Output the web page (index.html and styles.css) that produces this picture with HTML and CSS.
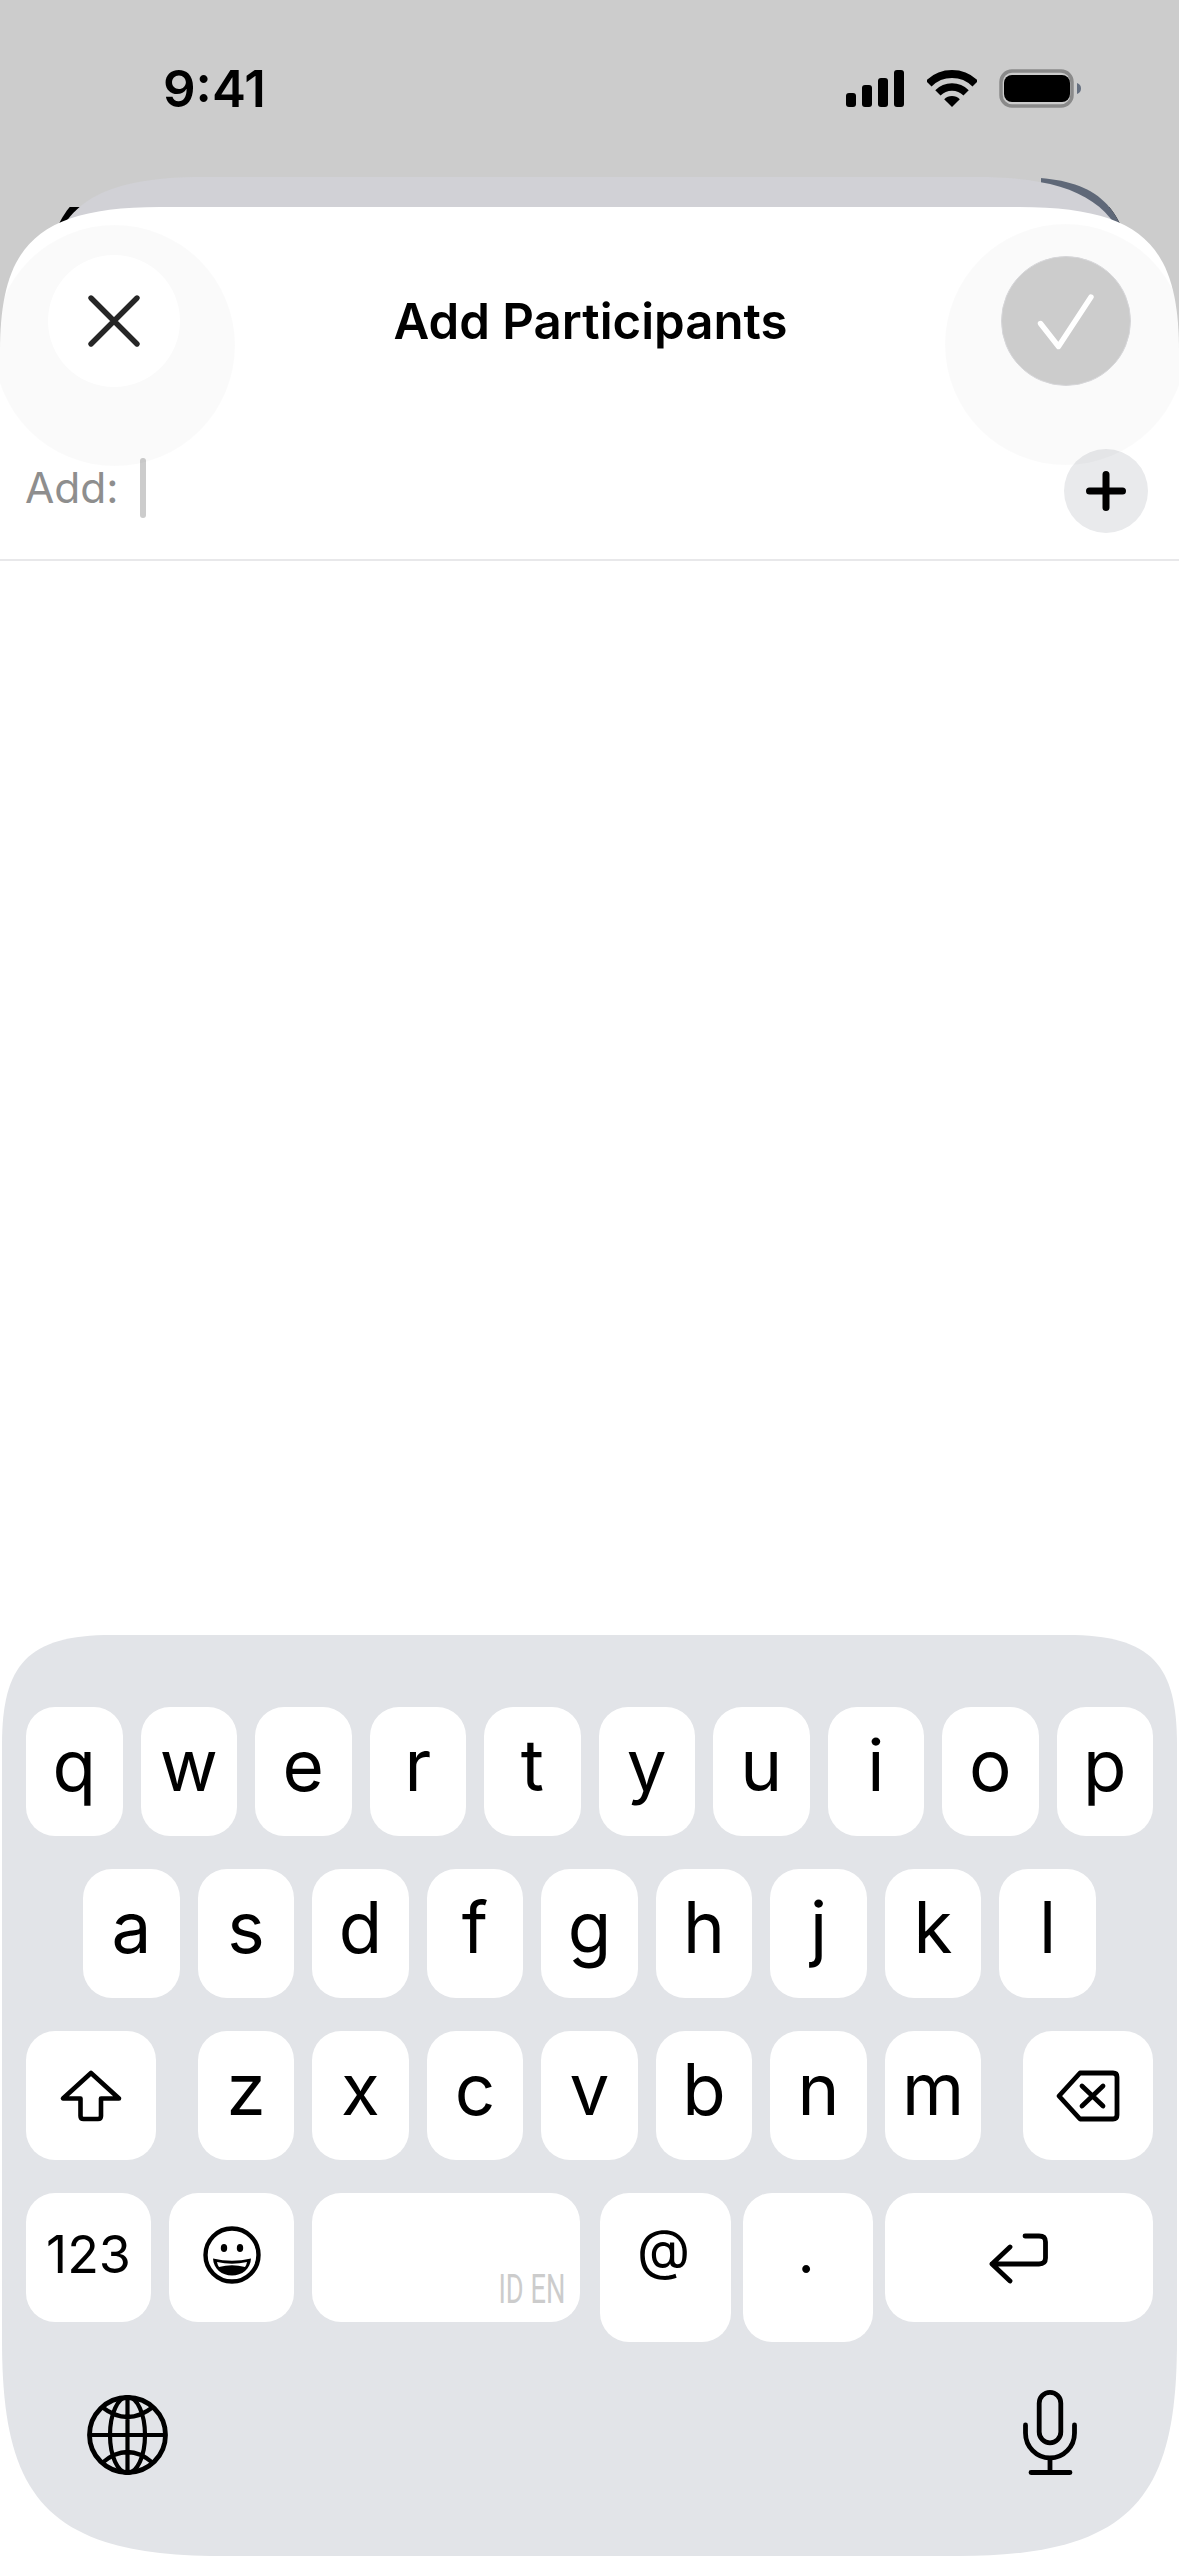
FILE: index.html
```html
<!DOCTYPE html>
<html lang="en">
<head>
<meta charset="utf-8">
<title>Add Participants</title>
<link rel="stylesheet" href="styles.css">
</head>
<body>
<div class="phone">
  <div class="card-back"></div>
  <div class="card-mid"></div>
  <header class="status">
    <span class="time">9:41</span>
    <div class="status-icons">
      <svg class="ic-signal" width="58" height="37" viewBox="0 0 58 37"><rect x="0" y="23" width="10" height="14" rx="3"/><rect x="16" y="15" width="10" height="22" rx="3"/><rect x="32" y="8" width="10" height="29" rx="3"/><rect x="48" y="0" width="10" height="37" rx="3"/></svg>
      <svg class="ic-wifi" width="50" height="37" viewBox="0 0 50 37"><path d="M1.7 13.7A33 33 0 0 1 48.3 13.7" fill="none" stroke="#000" stroke-width="8"/><path d="M10.9 22.9A20 20 0 0 1 39.1 22.9" fill="none" stroke="#000" stroke-width="7.5"/><path d="M25 37L17.2 29.2A11 11 0 0 1 32.8 29.2Z"/></svg>
      <svg class="ic-battery" width="82" height="39" viewBox="0 0 82 39"><rect x="2" y="2" width="71" height="35" rx="11" fill="none" stroke="#8a8a8a" stroke-width="3.5"/><rect x="5" y="6" width="66" height="27" rx="8"/><path d="M78 14C81 15 82 17 82 19.5S81 24 78 25Z" fill="#667080"/></svg>
    </div>
  </header>
  <main class="sheet">
    <div class="sheet-head">
      <button class="round close"><svg width="52" height="52" viewBox="0 0 52 52"><path d="M3 3L49 49M49 3L3 49" fill="none" stroke="#262626" stroke-width="5.4" stroke-linecap="round"/></svg></button>
      <h1 class="title">Add Participants</h1>
      <button class="round confirm"><svg width="56" height="55" viewBox="0 0 56 55"><path d="M2.5 29.500L20.500 52.500L53 3" fill="none" stroke="#fff" stroke-width="5.400" stroke-linecap="round" stroke-linejoin="round"/></svg></button>
    </div>
    <div class="add-row">
      <div class="add-field"><span class="add-label">Add:</span><span class="caret"></span></div>
      <button class="plus"><svg width="40" height="40" viewBox="0 0 40 40"><path d="M20 3.5V36.5M3.5 20H36.5" fill="none" stroke="#000" stroke-width="7" stroke-linecap="round"/></svg></button>
    </div>
    <section class="keyboard">
      <div class="row">
        <span class="key">q</span><span class="key">w</span><span class="key">e</span><span class="key">r</span><span class="key">t</span><span class="key">y</span><span class="key">u</span><span class="key">i</span><span class="key">o</span><span class="key">p</span>
      </div>
      <div class="row row-center">
        <span class="key">a</span><span class="key">s</span><span class="key">d</span><span class="key">f</span><span class="key">g</span><span class="key">h</span><span class="key">j</span><span class="key">k</span><span class="key">l</span>
      </div>
      <div class="row row-between">
        <span class="key key-wide"><svg width="64" height="54" viewBox="0 0 64 54"><path d="M32 4L4 29.5H21.5V47Q21.5 50 24.5 50H39Q42 50 42 47V29.5H60Z" fill="none" stroke="#000" stroke-width="4.6" stroke-linejoin="round"/></svg></span>
        <div class="letters">
          <span class="key">z</span><span class="key">x</span><span class="key">c</span><span class="key">v</span><span class="key">b</span><span class="key">n</span><span class="key">m</span>
        </div>
        <span class="key key-wide"><svg width="66" height="54" viewBox="0 0 66 54"><path d="M4 27L25 4H58Q62 4 62 8V46Q62 50 58 50H25Z" fill="none" stroke="#000" stroke-width="4.8" stroke-linejoin="round"/><path d="M27 17L48 37M48 17L27 37" fill="none" stroke="#000" stroke-width="4.8" stroke-linecap="round"/></svg></span>
      </div>
      <div class="row row-between row-last">
        <div class="cluster">
          <span class="key key-num">123</span>
          <span class="key key-emoji"><svg width="58" height="58" viewBox="0 0 58 58"><ellipse cx="29" cy="29" rx="26.5" ry="26.5" fill="none" stroke="#000" stroke-width="4.4"/><ellipse cx="21" cy="22" rx="3.2" ry="4"/><ellipse cx="37" cy="22" rx="3.2" ry="4"/><path d="M10 32.5Q29 37 48 32.5C47.5 43 39 49.5 29 49.5S10.500 43 10 32.500Z"/><path d="M14 36Q29 39.500 44 36Q43.500 39 42 41Q29 37.500 16 41Q14.500 39 14 36Z" fill="#fff"/></svg></span>
          <span class="key key-space"><span class="lang">ID EN</span></span>
        </div>
        <div class="cluster cluster-tight">
          <span class="key key-at">@</span>
          <span class="key key-dot">.</span>
          <span class="key key-return"><svg width="60" height="52" viewBox="0 0 60 52"><path d="M21 15L3 32L21 49M3 32H50Q56.500 32 56.500 26V10Q56.500 4 50 4H36" fill="none" stroke="#000" stroke-width="4.8" stroke-linecap="round" stroke-linejoin="round"/></svg></span>
        </div>
      </div>
      <div class="kb-bottom">
        <svg width="81" height="80" viewBox="0 0 81 80"><g fill="none" stroke="#000" stroke-width="4.2"><ellipse cx="40.500" cy="40" rx="38" ry="37.500" stroke-width="4.800"/><ellipse cx="40.500" cy="40" rx="17.500" ry="38"/><path d="M40.500 2V78M2 40H79M15 12Q40.500 32 66 12M15 68Q40.500 46 66 68"/></g></svg>
        <svg width="54" height="85" viewBox="0 0 54 85"><g fill="none" stroke="#000" stroke-width="4.800" stroke-linecap="round"><rect x="16.200" y="2.400" width="21.600" height="50.400" rx="10.800"/><path d="M2.500 35V43A24.500 25 0 0 0 51.500 43V35M27 68V82.500M8 82.500H47"/></g></svg>
      </div>
    </section>
  </main>
</div>
</body>
</html>
```
FILE: styles.css
```css
* { box-sizing: border-box; }
html, body { margin: 0; padding: 0; }
body { font-family: Inter, "Noto Sans", sans-serif; background: #ccc; }

.phone {
  position: relative;
  width: 1179px;
  height: 2556px;
  overflow: hidden;
  display: flex;
  flex-direction: column;
  background: #ccc;
}

.card-back, .card-mid { position: absolute; top: 177px; height: 200px; }
.card-back {
  left: 44px;
  width: 1091px;
  background:
    linear-gradient(90deg, transparent 997px, #5f6878 997px),
    linear-gradient(180deg, transparent 30px, #000 30px);
  clip-path: path("M0 145C0 30 30 0 120 0H971C1061 0 1091 30 1091 145V200H0Z");
}
.card-mid {
  left: 43px;
  width: 1093px;
  background: #d1d1d6;
  clip-path: path("M0 145C0 40 35 0 160 0H933C1058 0 1093 40 1093 145V200H0Z");
}

.status {
  position: relative;
  height: 207px;
  padding: 0 98px 31px 163px;
  display: flex;
  justify-content: space-between;
  align-items: center;
  flex: none;
}
.time { font-size: 51px; font-weight: 600; line-height: 1; color: #000; }
.status-icons { display: flex; align-items: center; }
.ic-wifi { margin: 0 22px 0 23px; }

.sheet {
  position: relative;
  flex: 1;
  display: flex;
  flex-direction: column;
  background: #fff;
  clip-path: path("M0 145C0 40 35 0 160 0H1019C1144 0 1179 40 1179 145V2349H0Z");
}
.sheet-head {
  position: relative;
  z-index: 1;
  padding: 48px 48px 0;
  display: flex;
  justify-content: space-between;
  align-items: center;
}
.title { margin: 0; padding-top: 2px; font-size: 49.2px; font-weight: 600; line-height: 1.2; color: #000; }

.round {
  position: relative;
  padding: 0;
  border: 0;
  border-radius: 50%;
  display: flex;
  align-items: center;
  justify-content: center;
}
.round svg { overflow: visible; }
.round::before {
  content: "";
  position: absolute;
  width: 241px;
  height: 241px;
  border-radius: 50%;
  background: rgba(0, 0, 0, .02);
  z-index: -1;
}
.close { width: 132px; height: 132px; background: #fff; }
.close::before { top: -30px; left: -54px; }
.confirm { width: 130px; height: 130px; background: #ccc; border: 1.5px solid #d6d6d9; }
.confirm::before { top: -33px; left: -57px; }

.add-row {
  padding: 62px 31px 26px 25px;
  display: flex;
  justify-content: space-between;
  align-items: center;
  border-bottom: 2px solid #e8e8ea;
}
.add-field { display: flex; align-items: center; margin-top: -6px; }
.add-label { font-size: 42.5px; line-height: 60px; color: #8e8e8e; }
.caret { width: 6px; height: 60px; margin-left: 21px; border-radius: 3px; background: #ccc; }
.plus {
  width: 84px;
  height: 84px;
  padding: 0;
  border: 0;
  border-radius: 50%;
  background: #e9eaec;
  display: flex;
  align-items: center;
  justify-content: center;
}

.keyboard {
  margin: auto 2px 0;
  height: 921px;
  padding: 72px 24px 0;
  background: #e2e4e8;
  clip-path: path("M0 110C0 30 25 0 110 0H1065C1150 0 1175 30 1175 110V705C1175 857 1135 921 957 921H218C40 921 0 857 0 705Z");
  display: flex;
  flex-direction: column;
  gap: 33px;
}
.row { display: flex; gap: 18px; height: 129px; flex: none; }
.row-center { justify-content: center; }
.row-between { justify-content: space-between; gap: 0; }
.letters, .cluster { display: flex; gap: 18px; }
.cluster-tight { gap: 12px; }

.key {
  width: 96.5px;
  height: 129px;
  padding-bottom: 12px;
  flex: none;
  display: flex;
  align-items: center;
  justify-content: center;
  background: #fff;
  border-radius: 29px;
  font-size: 71px;
  line-height: 1;
  color: #000;
}
.key-wide { width: 130px; padding-bottom: 0; }
.key-num { width: 125px; padding-bottom: 6px; font-size: 52px; }
.key-emoji { width: 125px; padding-bottom: 5px; }
.key-space {
  width: 268px;
  padding: 0 15px 18px 0;
  align-items: flex-end;
  justify-content: flex-end;
}
.lang {
  display: block;
  font-family: Roboto, sans-serif;
  font-size: 40px;
  font-weight: 400;
  line-height: 29px;
  color: #ccc;
  white-space: nowrap;
  transform: scaleX(.68);
  transform-origin: right center;
}
.key-at, .key-dot { height: 149px; align-items: flex-start; padding-bottom: 0; padding-right: 3px; }
.key-at { width: 131px; padding-top: 29px; font-size: 55px; }
.key-dot { width: 130.5px; padding-top: 28px; font-size: 60px; }
.key-return { width: 268px; padding-bottom: 0; }

.kb-bottom {
  margin-top: 35px;
  padding: 0 76px 0 61px;
  display: flex;
  justify-content: space-between;
  align-items: flex-end;
}
```
